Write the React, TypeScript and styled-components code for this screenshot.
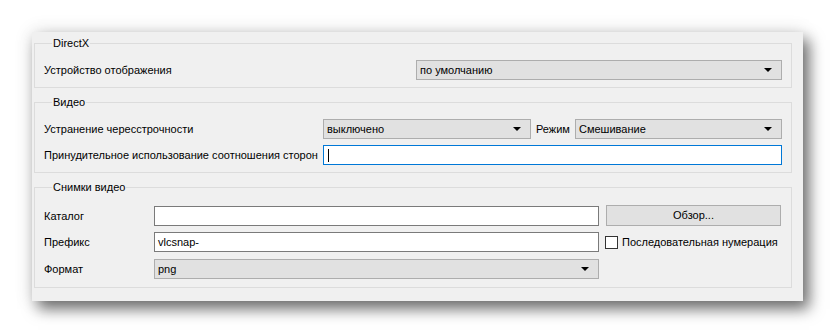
import styled, { createGlobalStyle } from 'styled-components';

const GlobalStyle = createGlobalStyle`
    html, body {
        margin: 0;
        padding: 0;
        background: #ffffff;
    }
    body {
        font-family: 'Liberation Sans', 'Noto Sans', sans-serif;
        font-size: 11px;
        color: #000000;
    }
`;

const Page = styled.div`
    width: 835px;
    height: 333px;
    padding: 32px 0 0 32px;
    box-sizing: border-box;
`;

const Panel = styled.div`
    width: 771px;
    height: 269px;
    box-sizing: border-box;
    background: #f0f0f0;
    padding: 4px 11px 0 2px;
    display: flex;
    flex-direction: column;
    gap: 7px;
    box-shadow: 6px 8px 14px rgba(0, 0, 0, 0.55), 0 0 18px rgba(0, 0, 0, 0.12);
`;

const Group = styled.fieldset<{ $pad?: string }>`
    margin: 0;
    border: 1px solid #dcdcdc;
    padding: ${(p) => p.$pad || '10px 9px 7px 9px'};
    min-width: 0;
`;

const Legend = styled.legend`
    margin-left: 8px;
    padding: 0 1px;
    line-height: 14px;
    font-size: 11px;
`;

const Row = styled.div<{ $cols: string; $gap?: number }>`
    display: grid;
    grid-template-columns: ${(p) => p.$cols};
    column-gap: ${(p) => p.$gap || 0}px;
    align-items: center;
    height: 20px;
`;

const Rows = styled.div<{ $gap: number }>`
    display: flex;
    flex-direction: column;
    gap: ${(p) => p.$gap}px;
`;

const Label = styled.span<{ $pad?: number }>`
    white-space: nowrap;
    padding-left: ${(p) => p.$pad || 0}px;
    line-height: 20px;
`;

const Combo = styled.div<{ $span?: number }>`
    position: relative;
    height: 20px;
    box-sizing: border-box;
    background: #e1e1e1;
    border: 1px solid #adadad;
    padding-left: 3px;
    line-height: 18px;
    grid-column: span ${(p) => p.$span || 1};

    &::after {
        content: '';
        position: absolute;
        right: 9px;
        top: 7px;
        border-left: 4px solid transparent;
        border-right: 4px solid transparent;
        border-top: 4px solid #000;
    }
`;

const TextBox = styled.div<{ $focused?: boolean; $span?: number }>`
    height: 20px;
    box-sizing: border-box;
    background: #ffffff;
    border: 1px solid ${(p) => (p.$focused ? '#0078d7' : '#7a7a7a')};
    padding-left: 3px;
    line-height: 18px;
    display: flex;
    align-items: center;
    grid-column: span ${(p) => p.$span || 1};
`;

const Caret = styled.span`
    display: inline-block;
    width: 1px;
    height: 13px;
    background: #000;
    margin-left: 1px;
`;

const Button = styled.div`
    height: 21px;
    box-sizing: border-box;
    background: #e1e1e1;
    border: 1px solid #adadad;
    text-align: center;
    line-height: 19px;
`;

const CheckLine = styled.label`
    display: flex;
    align-items: center;
    gap: 4px;
    margin-left: -1px;
    white-space: nowrap;
`;

const Box = styled.span`
    flex-shrink: 0;
    width: 13px;
    height: 13px;
    box-sizing: border-box;
    border: 1px solid #333333;
    background: #ffffff;
`;

const videoCols = '279px 208px 44px 1fr';
const shotCols = '103px 445px 175px';

export default function App() {
    return (
        <>
            <GlobalStyle />
            <Page>
                <Panel>
                    <Group $pad='10px 9px 7px 9px'>
                        <Legend>DirectX</Legend>
                        <Row $cols='1fr 366px'>
                            <Label>Устройство отображения</Label>
                            <Combo>по умолчанию</Combo>
                        </Row>
                    </Group>
                    <Group $pad='10px 9px 7px 9px'>
                        <Legend>Видео</Legend>
                        <Rows $gap={6}>
                            <Row $cols={videoCols}>
                                <Label>Устранение чересстрочности</Label>
                                <Combo>выключено</Combo>
                                <Label $pad={5}>Режим</Label>
                                <Combo>Смешивание</Combo>
                            </Row>
                            <Row $cols={videoCols}>
                                <Label>Принудительное использование соотношения сторон</Label>
                                <TextBox $focused $span={3}>
                                    <Caret />
                                </TextBox>
                            </Row>
                        </Rows>
                    </Group>
                    <Group $pad='11px 10px 8px 9px'>
                        <Legend>Снимки видео</Legend>
                        <Rows $gap={7}>
                            <Row $cols={shotCols} $gap={7}>
                                <Label>Каталог</Label>
                                <TextBox />
                                <Button>Обзор...</Button>
                            </Row>
                            <Row $cols={shotCols} $gap={7}>
                                <Label>Префикс</Label>
                                <TextBox>vlcsnap-</TextBox>
                                <CheckLine>
                                    <Box />
                                    Последовательная нумерация
                                </CheckLine>
                            </Row>
                            <Row $cols={shotCols} $gap={7}>
                                <Label>Формат</Label>
                                <Combo>png</Combo>
                            </Row>
                        </Rows>
                    </Group>
                </Panel>
            </Page>
        </>
    );
}
